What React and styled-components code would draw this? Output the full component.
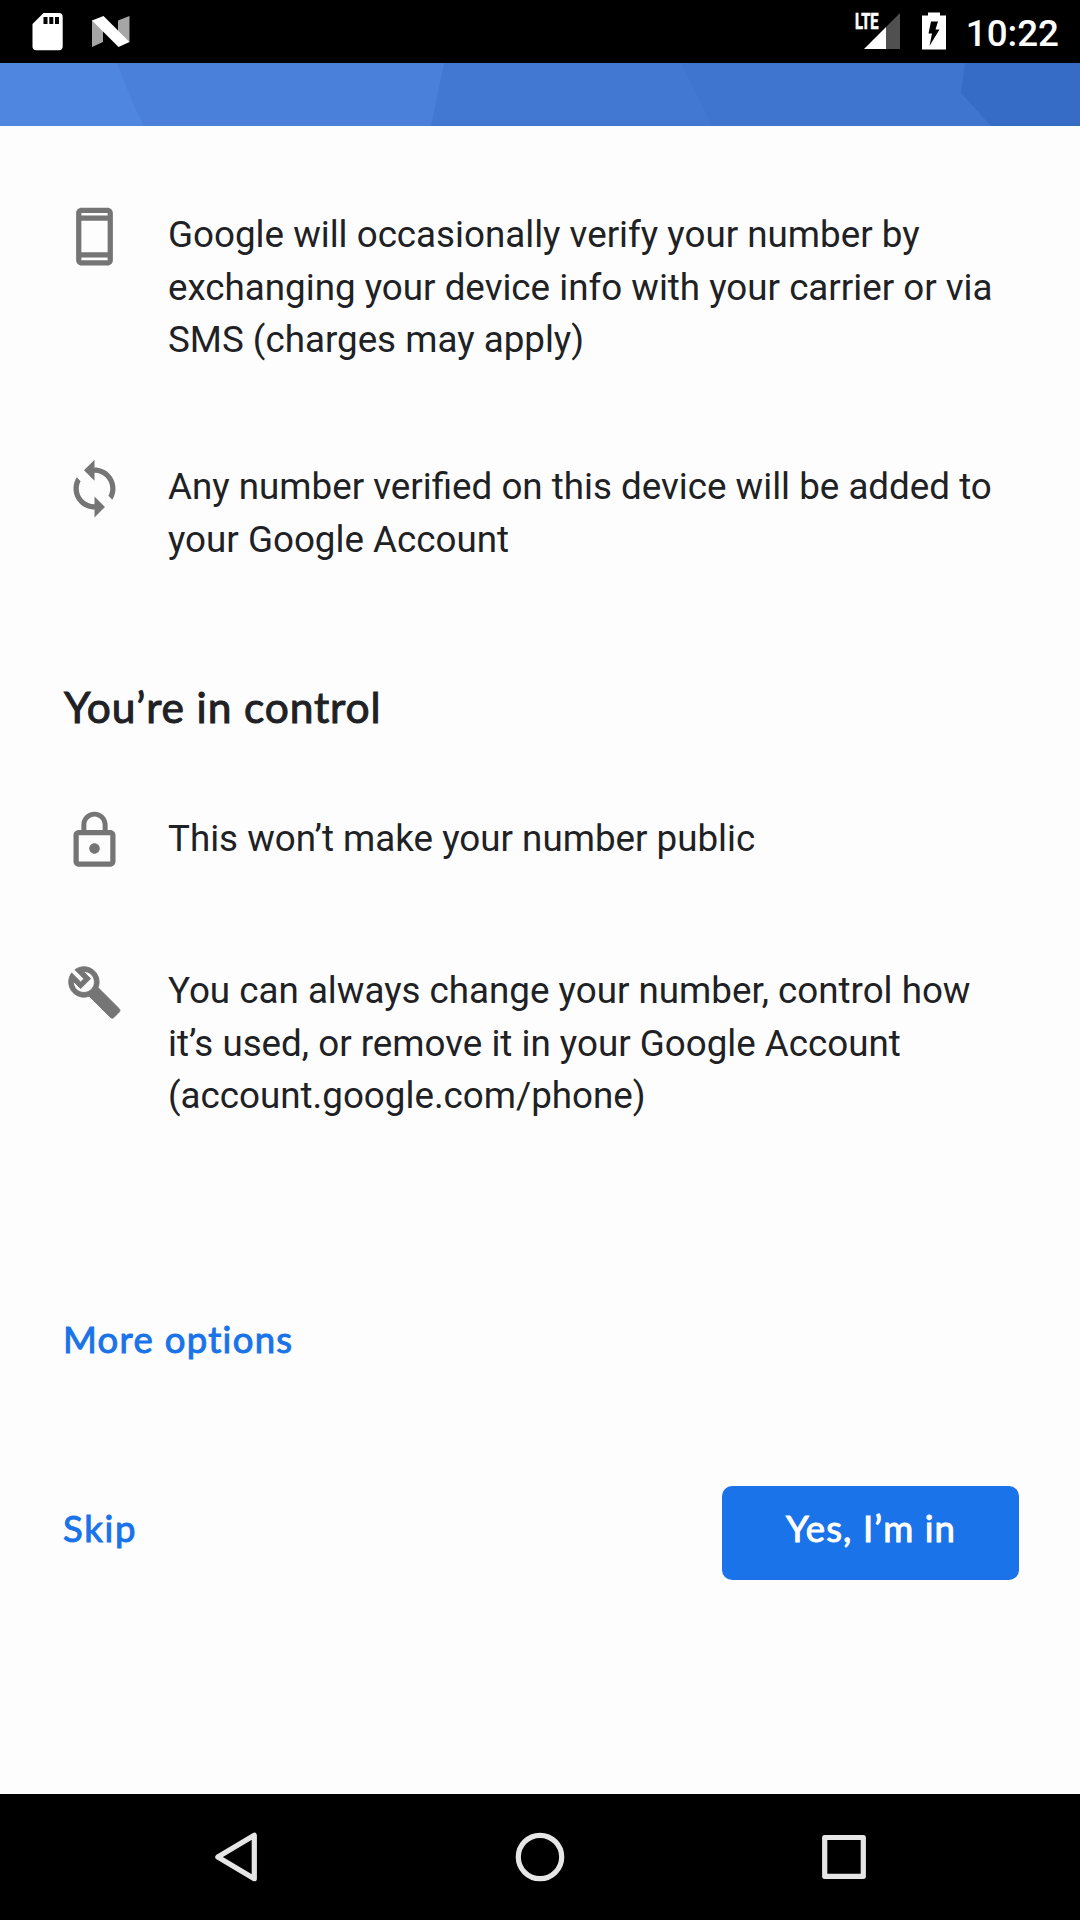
import React from "react";
import styled, { createGlobalStyle } from "styled-components";

const GlobalStyle = createGlobalStyle`
  * { box-sizing: border-box; }
  body { margin: 0; background: #fdfdfd; }
  button { border: 0; margin: 0; padding: 0; background: none; cursor: pointer; }
`;

const Screen = styled.div`
  display: flex;
  flex-direction: column;
  width: 1080px;
  height: 1920px;
  background: #fdfdfd;
  color: #202124;
  font-family: Roboto, "Liberation Sans", sans-serif;
  overflow: hidden;
`;

const StatusBar = styled.header`
  display: flex;
  justify-content: space-between;
  flex: none;
  height: 63px;
  padding: 0 21px 0 32px;
  background: #000;
  color: #fff;
`;

const StatusGroup = styled.div`
  display: flex;
  align-items: flex-start;
  gap: ${(p) => p.$gap}px;
`;

const StatusIcon = styled.svg`
  display: block;
  flex: none;
  margin-top: ${(p) => p.$top}px;
`;

const Network = styled.div`
  display: flex;
  align-items: flex-start;
  padding-right: 2px;
`;

const NetworkLabel = styled.span`
  width: 9px;
  margin-top: 10px;
  font-size: 22.5px;
  line-height: 23px;
  font-weight: 700;
  white-space: nowrap;
  transform: scaleX(0.65);
  transform-origin: 0 0;
  -webkit-text-stroke: 0.7px currentColor;
`;

const Clock = styled.time`
  margin-top: 12px;
  font-size: 36.75px;
  line-height: 43px;
  font-weight: 500;
`;

const Banner = styled.svg`
  display: block;
  flex: none;
  width: 1080px;
  height: 63px;
`;

const Content = styled.main`
  display: flex;
  flex-direction: column;
  align-items: stretch;
  flex: 1;
  padding: 79px 63px 0;
`;

const InfoList = styled.ul`
  display: flex;
  flex-direction: column;
  gap: ${(p) => p.$gap}px;
  margin: 0;
  padding: 0;
  list-style: none;
`;

const InfoRow = styled.li`
  display: flex;
  align-items: flex-start;
  gap: 42px;
`;

const InfoIcon = styled.svg`
  flex: none;
  width: 63px;
  height: 63px;
  fill: #757575;
`;

const InfoText = styled.p`
  margin: 0;
  padding-top: 4px;
  font-size: 36.75px;
  line-height: 52.7px;
  white-space: nowrap;
`;

const Heading = styled.h2`
  margin: 112.5px 0 74px;
  padding-left: 1px;
  font-family: Lato, "Open Sans", sans-serif;
  font-size: 42.5px;
  line-height: 56px;
  font-weight: 400;
  letter-spacing: 0.85px;
  -webkit-text-stroke: 1px currentColor;
`;

const LinkButton = styled.button`
  align-self: flex-start;
  color: #1a73e8;
  font-family: Lato, "Open Sans", sans-serif;
  font-size: 36.5px;
  line-height: 52px;
  font-weight: 400;
  letter-spacing: ${(p) => p.$spacing}px;
  -webkit-text-stroke: 1px currentColor;
`;

const MoreOptions = styled(LinkButton)`
  margin-top: 189.8px;
`;

const Actions = styled.div`
  display: flex;
  justify-content: space-between;
  margin: 121px -1.5px 0 0;
`;

const SkipButton = styled(LinkButton)`
  margin-top: 16px;
`;

const PrimaryButton = styled(LinkButton)`
  width: 297px;
  height: 94px;
  padding: 0 0 10px 2px;
  border-radius: 10px;
  background: #1a73e8;
  color: #fff;
`;

const NavBar = styled.nav`
  display: flex;
  align-items: flex-start;
  flex: none;
  height: 126px;
  padding: 33px 0 0 206px;
  gap: 244px;
  background: #000;
`;

const NavIcon = styled.svg`
  display: block;
  width: 60px;
  height: 60px;
  fill: none;
  stroke: #e6e6e6;
  stroke-width: 5.2;
  stroke-linejoin: round;
`;

const PhoneIcon = () => (
  <InfoIcon viewBox="0 0 24 24">
    <path d="M17 1.01L7 1c-1.1 0-2 .9-2 2v18c0 1.1.9 2 2 2h10c1.1 0 2-.9 2-2V3c0-1.1-.9-1.99-2-1.99zM17 21H7v-1h10v1zm0-3H7V6h10v12zm0-14H7V3h10v1z" />
  </InfoIcon>
);

const SyncIcon = () => (
  <InfoIcon viewBox="0 0 24 24">
    <path d="M12 4V1L8 5l4 4V6c3.31 0 6 2.69 6 6 0 1.01-.25 1.97-.7 2.8l1.46 1.46C19.54 15.03 20 13.57 20 12c0-4.42-3.58-8-8-8zm0 14c-3.31 0-6-2.69-6-6 0-1.01.25-1.97.7-2.8L5.24 7.74C4.46 8.97 4 10.43 4 12c0 4.42 3.58 8 8 8v3l4-4-4-4v3z" />
  </InfoIcon>
);

const LockIcon = () => (
  <InfoIcon viewBox="0 0 24 24">
    <path d="M12 17c1.1 0 2-.9 2-2s-.9-2-2-2-2 .9-2 2 .9 2 2 2zm6-9h-1V6c0-2.76-2.24-5-5-5S7 3.24 7 6v2H6c-1.1 0-2 .9-2 2v10c0 1.1.9 2 2 2h12c1.1 0 2-.9 2-2V10c0-1.1-.9-2-2-2zM8.9 6c0-1.71 1.39-3.1 3.1-3.1s3.1 1.39 3.1 3.1v2H8.9V6zM18 20H6V10h12v10z" />
  </InfoIcon>
);

const WrenchIcon = () => (
  <InfoIcon viewBox="0 0 24 24">
    <path
      fillRule="evenodd"
      stroke="#757575"
      strokeWidth=".4"
      strokeLinejoin="round"
      transform="translate(1.3 1.3) scale(.89)"
      d="M22.61 18.99l-9.08-9.08c.93-2.34.45-5.1-1.44-7C9.79.61 6.21.4 3.66 2.26L7.5 6.11 6.08 7.52 2.25 3.69C.39 6.23.6 9.82 2.9 12.11c1.86 1.86 4.57 2.35 6.89 1.48l9.11 9.11c.39.39 1.02.39 1.41 0l2.3-2.3c.4-.38.4-1.01 0-1.41zM3 7.26l3.09 3.09 4.24-4.24-3.09-3.09c1.24-.07 2.49.37 3.44 1.31 1.08 1.08 1.49 2.57 1.24 3.96-.3 1.9-1.9 3.4-3.77 3.67-1.36.2-2.79-.21-3.83-1.25C3.37 9.76 2.93 8.5 3 7.26z"
    />
  </InfoIcon>
);

export default function App() {
  return (
    <>
      <GlobalStyle />
      <Screen>
        <StatusBar>
          <StatusGroup $gap={29}>
            <StatusIcon $top={12} width="31" height="39" viewBox="0 0 31 39">
              <path fill="#fff" d="M11.5 1H27q3.700 0 3.700 3.700V34.500q0 3.700-3.700 3.700H4.200Q.5 38.200.5 34.500V12z" />
              <path d="M11.500 5h4v7h-4zM17.300 5h4v7h-4zM23 5h4v7h-4z" />
            </StatusIcon>
            <StatusIcon $top={15} width="38" height="33" viewBox="0 0 38 33">
              <path fill="#a6a6a6" d="M0 5L11 12V27L0 32zM26 5.500L37.500 1V27L26 19z" />
              <path fill="#fff" d="M0 5.500L11.500 1L37.500 27L26.500 32z" />
            </StatusIcon>
          </StatusGroup>
          <StatusGroup $gap={20}>
            <Network>
              <NetworkLabel>LTE</NetworkLabel>
              <StatusIcon $top={13} width="36" height="36" viewBox="0 0 36 36">
                <path fill="#505050" d="M36 0V36H22V14z" />
                <path fill="#fff" d="M22 14V36H0z" />
              </StatusIcon>
            </Network>
            <StatusIcon $top={12} width="24" height="38" viewBox="0 0 24 38">
              <path fill="#fff" d="M6 .5H18V3.500H24V37.500H0V3.500H6z" />
              <path d="M9 9.500H16L13.500 17.500H17.500L7.500 34L10 21.500H6.500z" />
            </StatusIcon>
            <Clock>10:22</Clock>
          </StatusGroup>
        </StatusBar>

        <Banner viewBox="0 0 1080 63">
          <path fill="#4f87e0" d="M0 0H1080V63H0z" />
          <path fill="#4a80da" d="M117 0H1080V63H144Q131 38 117 0z" />
          <path fill="#4278d2" d="M444 0H1080V63H431z" />
          <path fill="#3f75cf" d="M681 0H1080V63H712z" />
          <path fill="#366bc6" d="M965 0H1080V63H991L961 30z" />
        </Banner>

        <Content>
          <InfoList $gap={90}>
            <InfoRow>
              <PhoneIcon />
              <InfoText>
                Google will occasionally verify your number by
                <br />
                exchanging your device info with your carrier or via
                <br />
                SMS (charges may apply)
              </InfoText>
            </InfoRow>
            <InfoRow>
              <SyncIcon />
              <InfoText>
                Any number verified on this device will be added to
                <br />
                your Google Account
              </InfoText>
            </InfoRow>
          </InfoList>

          <Heading>You’re in control</Heading>

          <InfoList $gap={89}>
            <InfoRow>
              <LockIcon />
              <InfoText>This won’t make your number public</InfoText>
            </InfoRow>
            <InfoRow>
              <WrenchIcon />
              <InfoText>
                You can always change your number, control how
                <br />
                it’s used, or remove it in your Google Account
                <br />
                (account.google.com/phone)
              </InfoText>
            </InfoRow>
          </InfoList>

          <MoreOptions $spacing={1.3}>More options</MoreOptions>
          <Actions>
            <SkipButton $spacing={1.7}>Skip</SkipButton>
            <PrimaryButton $spacing={1.1}>Yes, I’m in</PrimaryButton>
          </Actions>
        </Content>

        <NavBar>
          <NavIcon viewBox="0 0 60 60">
            <path d="M48.300 8.300V51.700L11.800 30z" />
          </NavIcon>
          <NavIcon viewBox="0 0 60 60">
            <circle cx="30" cy="30" r="21.700" />
          </NavIcon>
          <NavIcon viewBox="0 0 60 60">
            <path d="M10.700 10.500H49.300V49.300H10.700z" />
          </NavIcon>
        </NavBar>
      </Screen>
    </>
  );
}
